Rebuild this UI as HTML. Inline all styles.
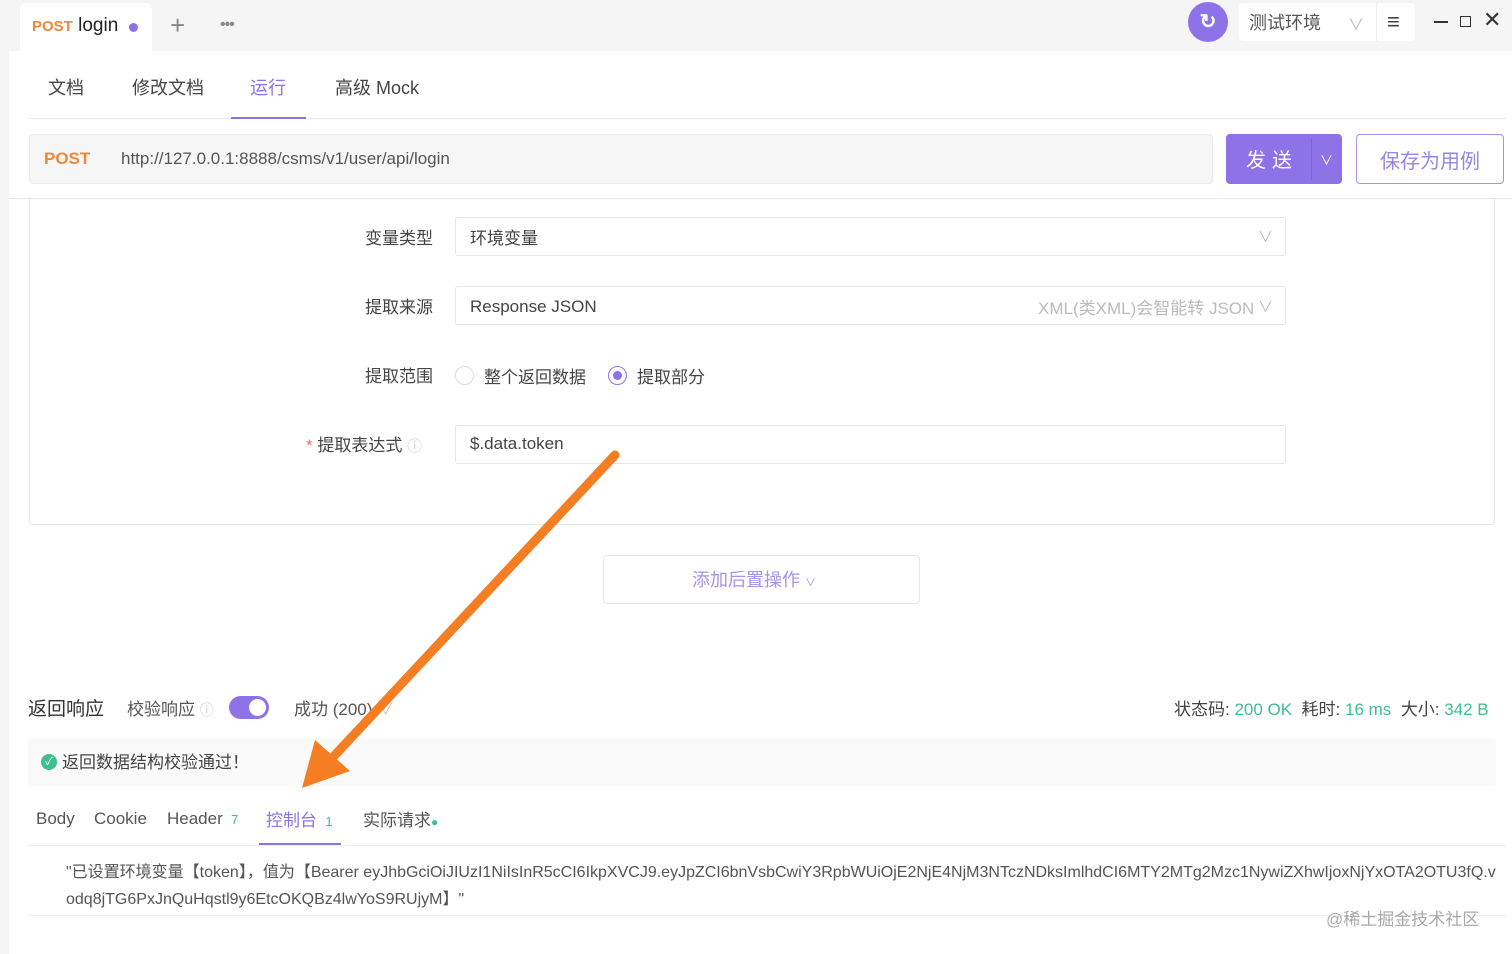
<!DOCTYPE html>
<html><head><meta charset="utf-8"><style>
*{box-sizing:border-box;margin:0;padding:0}
body{width:1512px;height:954px;overflow:hidden;background:#f5f5f5;font-family:"Liberation Sans","Noto Sans CJK SC",sans-serif;color:#333;position:relative}
.a{position:absolute}
.p{color:#8e72e8}
.g{color:#3fbf8f}
.t{font-size:18px;white-space:nowrap;transform:translateY(-3px)}
</style></head><body>
<div class="a" style="left:20px;top:3px;width:132px;height:49px;background:#fff;border-radius:6px 6px 0 0"></div>
<div class="a t" style="left:32px;top:18px;font-size:19px"><b style="color:#f0883a;font-size:15px">POST</b> <span style="color:#222">login</span></div>
<div class="a" style="left:129px;top:23px;width:9px;height:9px;border-radius:50%;background:#8e72e8"></div>
<div class="a" style="left:170px;top:10px;font-size:26px;color:#888;font-weight:300">+</div>
<div class="a" style="left:220px;top:16px;font-size:16px;color:#888;letter-spacing:-1px">•••</div>
<div class="a" style="left:1188px;top:2px;width:40px;height:40px;border-radius:50%;background:#8e72e8;color:#fff;text-align:center;line-height:40px;font-size:20px;font-weight:bold">↻</div>
<div class="a" style="left:1239px;top:3px;width:176px;height:38px;background:#fff;border-radius:4px"></div>
<div class="a t" style="left:1249px;top:12px;color:#555">测试环境</div>
<div class="a" style="left:1348px;top:11px;color:#bbb;font-size:16px">∨</div>
<div class="a" style="left:1376px;top:3px;width:1px;height:38px;background:#eee"></div>
<div class="a" style="left:1387px;top:9px;color:#444;font-size:22px">≡</div>
<div class="a" style="left:1434px;top:21px;width:14px;height:2px;background:#333"></div>
<div class="a" style="left:1460px;top:16px;width:11px;height:11px;border:1.5px solid #333"></div>
<div class="a" style="left:1483px;top:7px;color:#333;font-size:22px">✕</div>
<div class="a" style="left:9px;top:51px;width:1503px;height:903px;background:#fff"></div>
<div class="a t" style="left:48px;top:77px;color:#444">文档</div>
<div class="a t" style="left:132px;top:77px;color:#444">修改文档</div>
<div class="a t p" style="left:250px;top:77px">运行</div>
<div class="a t" style="left:335px;top:77px;color:#444">高级 Mock</div>
<div class="a" style="left:28px;top:118px;width:1478px;height:1px;background:#eaeaea"></div>
<div class="a" style="left:231px;top:117px;width:75px;height:2px;background:#8e72e8"></div>
<div class="a" style="left:29px;top:134px;width:1184px;height:50px;background:#f6f6f6;border:1px solid #ebebeb;border-radius:4px"></div>
<div class="a t" style="left:44px;top:152px;color:#f0883a;font-weight:bold;font-size:17px">POST</div>
<div class="a t" style="left:121px;top:152px;color:#555;font-size:17px">http://127.0.0.1:8888/csms/v1/user/api/login</div>
<div class="a" style="left:1226px;top:134px;width:116px;height:50px;background:#8e72e8;border-radius:4px"></div>
<div class="a t" style="left:1246px;top:147px;color:#fff;font-size:20px;letter-spacing:6px">发送</div>
<div class="a" style="left:1311px;top:138px;width:1px;height:42px;background:#7d63d6"></div>
<div class="a" style="left:1320px;top:150px;color:#fff;font-size:13px">∨</div>
<div class="a" style="left:1356px;top:134px;width:148px;height:50px;border:1.5px solid #a892ea;border-radius:4px"></div>
<div class="a t p" style="left:1380px;top:148px;font-size:20px;color:#9a84e6">保存为用例</div>
<div class="a" style="left:9px;top:198px;width:1503px;height:1px;background:#e8e8e8"></div>
<div class="a" style="left:29px;top:198px;width:1466px;height:327px;border:1px solid #e6e6e6;border-top:none;border-radius:0 0 4px 4px"></div>
<div class="a t" style="left:365px;top:227px;color:#444;font-size:17px">变量类型</div>
<div class="a" style="left:455px;top:217px;width:831px;height:39px;border:1px solid #e6e6e6;border-radius:3px"></div>
<div class="a t" style="left:470px;top:227px;color:#444;font-size:17px">环境变量</div>
<div class="a" style="left:1258px;top:226px;color:#bbb;font-size:15px">∨</div>
<div class="a t" style="left:365px;top:296px;color:#444;font-size:17px">提取来源</div>
<div class="a" style="left:455px;top:286px;width:831px;height:39px;border:1px solid #e6e6e6;border-radius:3px"></div>
<div class="a t" style="left:470px;top:300px;color:#444;font-size:17px">Response JSON</div>
<div class="a t" style="left:1038px;top:297px;color:#bbb;font-size:17px">XML(类XML)会智能转 JSON</div>
<div class="a" style="left:1258px;top:296px;color:#bbb;font-size:15px">∨</div>
<div class="a t" style="left:365px;top:365px;color:#444;font-size:17px">提取范围</div>
<div class="a" style="left:455px;top:366px;width:19px;height:19px;border:1px solid #ddd;border-radius:50%"></div>
<div class="a t" style="left:484px;top:366px;color:#444;font-size:17px">整个返回数据</div>
<div class="a" style="left:608px;top:366px;width:19px;height:19px;border:1.5px solid #8e72e8;border-radius:50%"></div>
<div class="a" style="left:613px;top:371px;width:9px;height:9px;background:#8e72e8;border-radius:50%"></div>
<div class="a t" style="left:637px;top:366px;color:#444;font-size:17px">提取部分</div>
<div class="a t" style="left:306px;top:434px;color:#444;font-size:17px"><span style="color:#f56c6c">*</span> 提取表达式 <span style="color:#ccc;font-size:15px">ⓘ</span></div>
<div class="a" style="left:455px;top:425px;width:831px;height:39px;border:1px solid #e6e6e6;border-radius:3px"></div>
<div class="a t" style="left:470px;top:437px;color:#444;font-size:17px">$.data.token</div>
<div class="a" style="left:603px;top:555px;width:317px;height:49px;border:1px solid #e6e6e6;border-radius:4px"></div>
<div class="a t" style="left:692px;top:569px;color:#a892ea;font-size:18px">添加后置操作 <span style="font-size:11px">∨</span></div>
<div class="a t" style="left:28px;top:697px;color:#333;font-size:19px">返回响应</div>
<div class="a t" style="left:127px;top:698px;color:#555;font-size:17px">校验响应 <span style="color:#ccc;font-size:14px">ⓘ</span></div>
<div class="a" style="left:229px;top:696px;width:40px;height:23px;border-radius:12px;background:#8e72e8"></div>
<div class="a" style="left:249px;top:699px;width:17px;height:17px;border-radius:50%;background:#fff"></div>
<div class="a t" style="left:294px;top:698px;color:#555;font-size:17px">成功 (200) <span style="color:#ccc">∨</span></div>
<div class="a t" style="left:1174px;top:698px;color:#444;font-size:17px">状态码: <span class="g">200 OK</span> &nbsp;耗时: <span class="g">16 ms</span> &nbsp;大小: <span class="g">342 B</span></div>
<div class="a" style="left:28px;top:738px;width:1468px;height:48px;background:#fafafa;border-radius:4px"></div>
<div class="a" style="left:41px;top:754px;width:16px;height:16px;border-radius:50%;background:#3fbf8f;color:#fff;font-size:11px;text-align:center;line-height:16px">✓</div>
<div class="a t" style="left:62px;top:751px;color:#444;font-size:17px">返回数据结构校验通过！</div>
<div class="a t" style="left:36px;top:812px;color:#555;font-size:17px">Body</div>
<div class="a t" style="left:94px;top:812px;color:#555;font-size:17px">Cookie</div>
<div class="a t" style="left:167px;top:812px;color:#555;font-size:17px">Header <span class="g" style="font-size:13px">&nbsp;7</span></div>
<div class="a t p" style="left:266px;top:809px;font-size:17px">控制台 <span class="g" style="font-size:13px">&nbsp;1</span></div>
<div class="a t" style="left:363px;top:809px;color:#555;font-size:17px">实际请求<span class="g" style="font-size:12px">●</span></div>
<div class="a" style="left:28px;top:845px;width:1478px;height:1px;background:#eee"></div>
<div class="a" style="left:259px;top:843px;width:82px;height:2px;background:#8e72e8"></div>
<div class="a" style="left:66px;top:859px;width:1438px;color:#555;font-size:16px;line-height:27px;word-break:break-all;letter-spacing:0">"已设置环境变量【token】，值为【Bearer eyJhbGciOiJIUzI1NiIsInR5cCI6IkpXVCJ9.eyJpZCI6bnVsbCwiY3RpbWUiOjE2NjE4NjM3NTczNDksImlhdCI6MTY2MTg2Mzc1NywiZXhwIjoxNjYxOTA2OTU3fQ.vodq8jTG6PxJnQuHqstl9y6EtcOKQBz4lwYoS9RUjyM】"</div>
<div class="a" style="left:28px;top:915px;width:1478px;height:1px;background:#eee"></div>
<div class="a t" style="left:1326px;top:908px;color:#aaa;font-size:17px">@稀土掘金技术社区</div>
<svg class="a" style="left:0;top:0" width="1512" height="954"><line x1="615" y1="455" x2="335" y2="755" stroke="#f57d22" stroke-width="9" stroke-linecap="round"/><polygon points="302,788 315,740 350,771" fill="#f57d22"/></svg>
</body></html>
